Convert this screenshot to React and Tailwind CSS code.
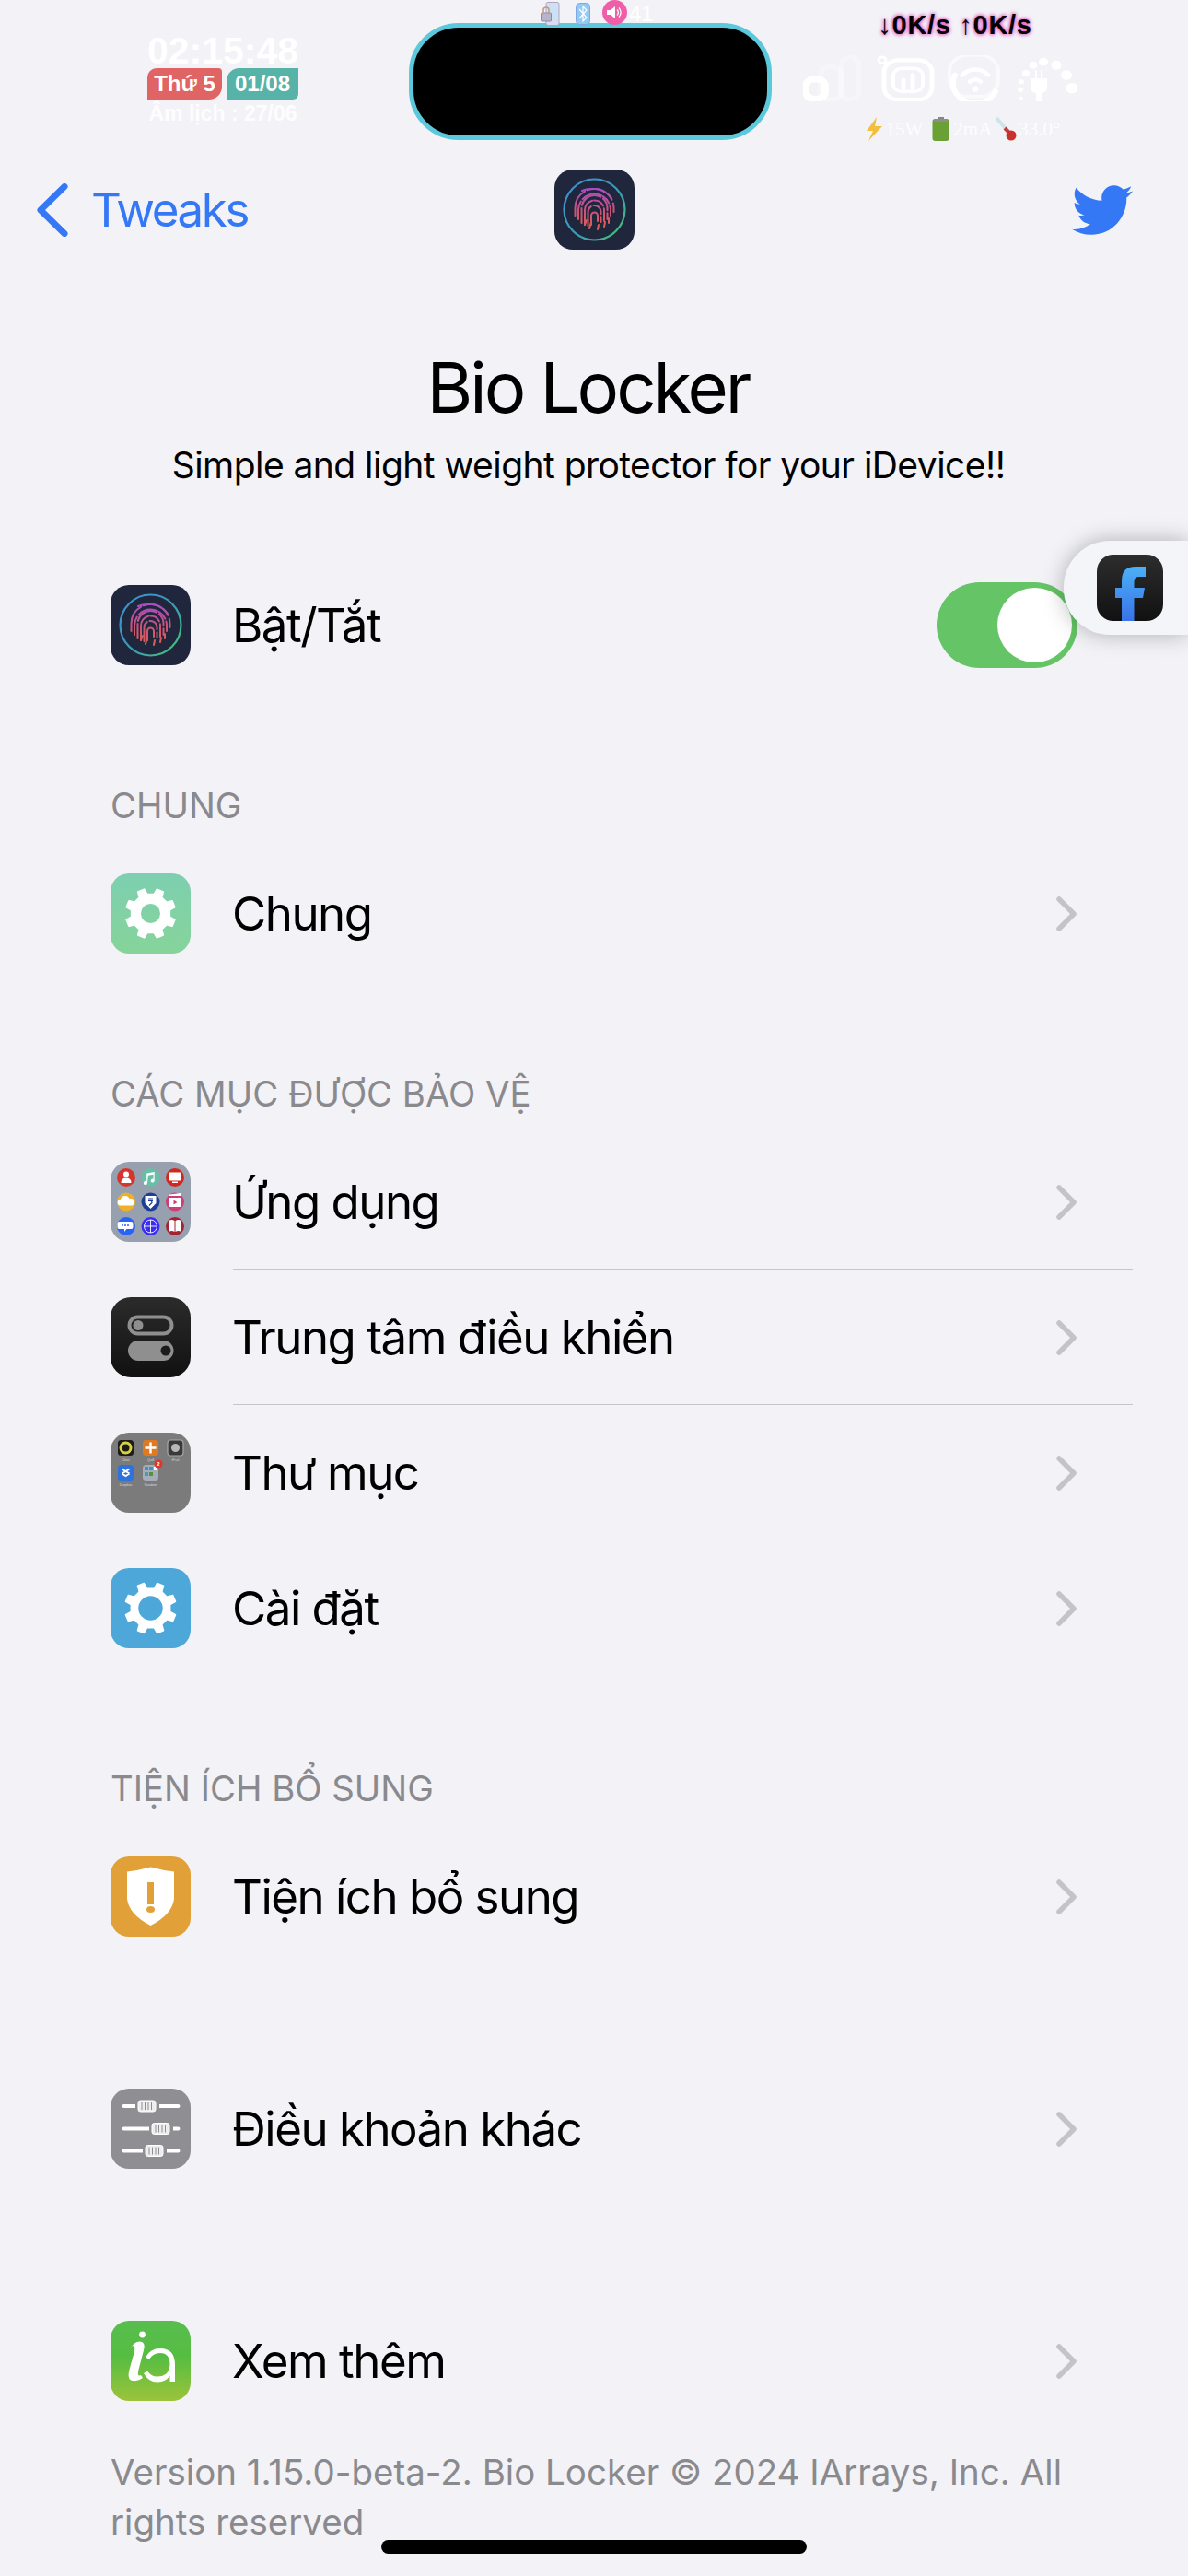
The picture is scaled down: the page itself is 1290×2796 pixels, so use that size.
import React from 'react';
import { FaTwitter } from 'react-icons/fa';

const gearPath = (teeth, outer, root, hole, offset = 0, c = 43.5) => {
  const step = (Math.PI * 2) / teeth;
  let d = '';
  for (let i = 0; i < teeth; i++) {
    const a = offset + i * step;
    const pts = [
      [root, a - step * 0.27],
      [outer, a - step * 0.17],
      [outer, a + step * 0.17],
      [root, a + step * 0.27],
    ];
    pts.forEach(([r, t], j) => {
      const x = (c + r * Math.cos(t)).toFixed(2);
      const y = (c + r * Math.sin(t)).toFixed(2);
      d += `${i === 0 && j === 0 ? 'M' : 'L'}${x} ${y} `;
    });
  }
  d += `Z M${c + hole} ${c} A${hole} ${hole} 0 1 0 ${c - hole} ${c} A${hole} ${hole} 0 1 0 ${c + hole} ${c} Z`;
  return d;
};

const FingerprintIcon = ({ uid }) => {
  const arches = [
    { r: 3.5, top: 38, a: 50, b: 60, dash: '30 3 8 2' },
    { r: 7, top: 36, a: 46, b: 61, dash: '22 3 14 3 8' },
    { r: 10.5, top: 34, a: 44, b: 60, dash: '30 2 12 3 14' },
    { r: 14, top: 32, a: 42, b: 58, dash: '16 3 26 3 14 3 10' },
    { r: 17.5, top: 30, a: 44, b: 54, dash: '20 3 22 2 10 3 12' },
    { r: 21, top: 28, a: 42, b: 50, dash: '30 3 20 3 8 4 12' },
  ];
  return (
    <svg width="87" height="87" viewBox="0 0 87 87" className="block rounded-[20px]">
      <defs>
        <linearGradient id={`${uid}r`} x1="0" y1="0" x2="1" y2="1">
          <stop offset="0" stopColor="#3d8fd6" />
          <stop offset="0.55" stopColor="#3a9cb4" />
          <stop offset="1" stopColor="#4cc46c" />
        </linearGradient>
        <linearGradient id={`${uid}f`} gradientUnits="userSpaceOnUse" x1="0" y1="20" x2="0" y2="68">
          <stop offset="0" stopColor="#a94cc8" />
          <stop offset="0.5" stopColor="#c8547c" />
          <stop offset="1" stopColor="#e2604a" />
        </linearGradient>
      </defs>
      <rect width="87" height="87" fill="#20273c" />
      <circle cx="43.5" cy="43.5" r="33" fill="none" stroke={`url(#${uid}r)`} strokeWidth="2.2" />
      <g fill="none" stroke={`url(#${uid}f)`} strokeWidth="2" strokeLinecap="round">
        {arches.map((p) => (
          <path
            key={p.r}
            d={`M${43.5 - p.r} ${p.b} V${p.a} A${p.r} ${p.r} 0 0 1 ${43.5 + p.r} ${p.a} V${p.b - 4}`}
            strokeDasharray={p.dash}
          />
        ))}
        <path d="M30 23 A24 24 0 0 1 42 21" />
        <path d="M46 21 A24 24 0 0 1 62 31" />
        <path d="M38 64 L40 57 M47 65 L48 60 M33 60 L35 55 M54 62 L55 57 M59 53 L59 58" />
      </g>
    </svg>
  );
};

const GreenGearIcon = () => (
  <svg width="87" height="87" viewBox="0 0 87 87" className="block rounded-[20px]">
    <defs>
      <linearGradient id="greenGear" x1="0" y1="0" x2="0" y2="1">
        <stop offset="0" stopColor="#7dcfb0" />
        <stop offset="1" stopColor="#86d49a" />
      </linearGradient>
    </defs>
    <rect width="87" height="87" fill="url(#greenGear)" />
    <path
      d={gearPath(8, 27, 21, 11.5, Math.PI / 8)}
      fill="#fff"
      fillRule="evenodd"
      stroke="#fff"
      strokeWidth="2"
      strokeLinejoin="round"
    />
  </svg>
);

const BlueGearIcon = () => (
  <svg width="87" height="87" viewBox="0 0 87 87" className="block rounded-[20px]">
    <rect width="87" height="87" fill="#4da7d8" />
    <path
      d={gearPath(8, 28, 21.5, 14, Math.PI / 8)}
      fill="#fff"
      fillRule="evenodd"
      stroke="#fff"
      strokeWidth="1.5"
      strokeLinejoin="round"
    />
  </svg>
);

const AppsFolderIcon = () => {
  const cols = [17, 43.5, 70];
  const rows = [17, 43.5, 70];
  const colors = ['#d9342b', '#66bfa6', '#d0281f', '#edb02c', '#1d3f96', '#d03c78', '#2a62f5', '#3b2df0', '#a32430'];
  return (
    <svg width="87" height="87" viewBox="0 0 87 87" className="block rounded-[20px]">
      <rect width="87" height="87" fill="#97a0ae" />
      {rows.map((y, r) =>
        cols.map((x, c) => <circle key={`${r}${c}`} cx={x} cy={y} r="10" fill={colors[r * 3 + c]} />),
      )}
      <g fill="#fff">
        <circle cx="17" cy="13.5" r="3" />
        <path d="M11.5 23 q0-5.5 5.5-5.5 t5.5 5.5z" />
        <path d="M40 23 a2 2 0 1 1 -.8-1.6 V12.5 l8.5-1.5 v9.5 a2 2 0 1 1 -1.2-1.8 v-5 l-5.5 1z" />
        <rect x="63.5" y="11.5" width="13" height="9" rx="1" />
        <rect x="67" y="21.5" width="6" height="1.5" />
        <path d="M10 47.5 a3.5 3.5 0 0 1 1-6.8 a5 5 0 0 1 9.5-.5 a3.6 3.6 0 0 1 3 7.3z" />
        <path d="M37.5 37 L49.5 37 L49.5 45 L43.5 51 L37.5 45z" />
        <rect x="63.5" y="39" width="13" height="10" rx="1" />
        <path d="M64 35.5 l12-1.5 v3 h-12z" />
        <path d="M10.5 65.5 h13 a2 2 0 0 1 2 2 v4 a2 2 0 0 1-2 2 h-5 l-2.5 3 v-3 h-5.5 a2 2 0 0 1-2-2 v-4 a2 2 0 0 1 2-2z" transform="translate(-1 -0.5)" />
        <path d="M64 63.5 q3-1 5.5 .5 v12 q-2.5-1.5-5.5-.5z M76 63.5 q-3-1-5.5 .5 v12 q2.5-1.5 5.5-.5z" />
      </g>
      <g fill="none" stroke="#fff" strokeWidth="0.9">
        <circle cx="43.5" cy="70" r="7" />
        <path d="M36.5 70 h14 M43.5 63 v14" />
      </g>
      <g fill="#2a62f5">
        <circle cx="13" cy="69" r="1" />
        <circle cx="16" cy="69" r="1" />
        <circle cx="19" cy="69" r="1" />
      </g>
      <path d="M41 40 h5 M41 42.5 h5 M43 42.5 q2 0 2 2 l-3 3" stroke="#1d3f96" strokeWidth="1.2" fill="none" />
      <path d="M68.5 41.5 l4 2.5 l-4 2.5z" fill="#d03c78" />
    </svg>
  );
};

const ControlCenterIcon = () => (
  <svg width="87" height="87" viewBox="0 0 87 87" className="block rounded-[22px]">
    <defs>
      <linearGradient id="ccBg" x1="0" y1="0" x2="0" y2="1">
        <stop offset="0" stopColor="#2b2b2b" />
        <stop offset="1" stopColor="#111" />
      </linearGradient>
    </defs>
    <rect width="87" height="87" fill="url(#ccBg)" />
    <rect x="20.5" y="21.5" width="46" height="18" rx="9" fill="none" stroke="#8f8f8f" strokeWidth="4" />
    <circle cx="30" cy="30.5" r="5.5" fill="#8f8f8f" />
    <rect x="19" y="47" width="49.5" height="22" rx="11" fill="#8f8f8f" />
    <circle cx="60" cy="58" r="5.5" fill="#1c1c1c" />
  </svg>
);

const FoldersIcon = () => {
  const Tile = ({ x, y, bg, label, children }) => (
    <g>
      <rect x={x} y={y} width="17" height="17" rx="3.5" fill={bg} />
      {children}
      <text x={x + 8.5} y={y + 22.5} textAnchor="middle" fontSize="3.6" fill="#d8d8d8" fontFamily="Liberation Sans, sans-serif">
        {label}
      </text>
    </g>
  );
  return (
    <svg width="87" height="87" viewBox="0 0 87 87" className="block rounded-[20px]">
      <rect width="87" height="87" fill="#7b7b7b" />
      <Tile x={8} y={8} bg="#1c1c1c" label="Clear">
        <circle cx="16.5" cy="16.5" r="5.5" fill="none" stroke="#d8d23c" strokeWidth="3" />
      </Tile>
      <Tile x={35} y={8} bg="#e07a22" label="Quill">
        <path d="M43.5 10.5 v12 M37.5 16.5 h12" stroke="#fff" strokeWidth="2.4" />
      </Tile>
      <Tile x={62} y={8} bg="#3a3a3a" label="iFruit">
        <rect x="62" y="8" width="17" height="17" rx="3.5" fill="none" stroke="#a8a8a8" strokeWidth="1.2" />
        <circle cx="70.5" cy="16.5" r="4.5" fill="#b8b8b8" />
      </Tile>
      <Tile x={8} y={35} bg="#2f72dc" label="Dropbox">
        <path d="M12.5 39.5 l4 2.5 l4-2.5 M12.5 44.5 l4 2.5 l4-2.5 M16.5 42 l-4 2.5 M16.5 42 l4 2.5" stroke="#fff" strokeWidth="2" fill="none" />
      </Tile>
      <Tile x={35} y={35} bg="#a5adb8" label="Random">
        <rect x="37" y="37" width="4" height="4" fill="#3f8fd0" />
        <rect x="42" y="37" width="4" height="4" fill="#3f8fd0" />
        <rect x="47" y="37" width="3.5" height="4" fill="#fff" />
        <rect x="37" y="43" width="4" height="4" fill="#42a0a8" />
        <rect x="42" y="43" width="4" height="4" fill="#5b8f3c" />
      </Tile>
      <circle cx="52" cy="34" r="4.5" fill="#e0352f" />
      <text x="52" y="36" textAnchor="middle" fontSize="6" fontWeight="700" fill="#fff" fontFamily="Liberation Sans, sans-serif">
        2
      </text>
    </svg>
  );
};

const ShieldIcon = () => (
  <svg width="87" height="87" viewBox="0 0 87 87" className="block rounded-[20px]">
    <rect width="87" height="87" fill="#e2a138" />
    <path d="M18 16.5 Q31 15 43.5 11.5 Q56 15 69 16.5 V46 Q67 63 43.5 75 Q20 63 18 46z" fill="#fff" />
    <rect x="40" y="28" width="7" height="24" fill="#e2a138" />
    <ellipse cx="43.5" cy="57.5" rx="4.5" ry="3.5" fill="#e2a138" />
  </svg>
);

const SlidersIcon = () => {
  const Handle = ({ x, y }) => (
    <g>
      <rect x={x} y={y - 6} width="19" height="12" rx="2.5" fill="#eeeeee" stroke="#fff" strokeWidth="1" />
      <path d={`M${x + 4} ${y - 4} v8 M${x + 7.5} ${y - 4} v8 M${x + 11} ${y - 4} v8 M${x + 14.5} ${y - 4} v8`} stroke="#8e8e93" strokeWidth="1" />
    </g>
  );
  return (
    <svg width="87" height="87" viewBox="0 0 87 87" className="block rounded-[20px]">
      <rect width="87" height="87" fill="#8e8e93" />
      <path d="M14.5 19 H73.5 M14.5 43.5 H73.5 M14.5 67.5 H73.5" stroke="#fff" strokeWidth="4" strokeLinecap="round" />
      <g stroke="#8e8e93" strokeWidth="0">
        <rect x="27" y="13" width="26" height="12" fill="#8e8e93" />
        <rect x="42" y="37" width="26" height="12" fill="#8e8e93" />
        <rect x="35" y="61" width="26" height="12" fill="#8e8e93" />
      </g>
      <Handle x={30} y={19} />
      <Handle x={45} y={43.5} />
      <Handle x={38} y={67.5} />
    </svg>
  );
};

const IaIcon = () => (
  <svg width="87" height="87" viewBox="0 0 87 87" className="block rounded-[20px]">
    <defs>
      <linearGradient id="iaBg" x1="0" y1="0" x2="0" y2="1">
        <stop offset="0" stopColor="#57bd4e" />
        <stop offset="0.45" stopColor="#56bd42" />
        <stop offset="1" stopColor="#9cc33a" />
      </linearGradient>
    </defs>
    <rect width="87" height="87" fill="url(#iaBg)" />
    <circle cx="34.5" cy="15" r="3.4" fill="#fff" />
    <path d="M21 31 Q25 22.5 32 22.5 Q38.5 23 36 32 L30 55 Q29 61 33 59 L35 62 Q27 67 22 64.5 Q18 62 20.5 53 L26 33 Q27 27 24 27 Q22.5 27.5 21 31z" fill="#fff" />
    <path d="M70 66 H64.5 V59.5 Q60 66.5 51 66.5 Q41 66.5 36 57 L40 54.5 Q44 60.5 50.5 60.5 Q64 60.5 64.5 47 Q64 35 54 35 Q46 35 42 42 L38 39.5 Q43 30 54 30 Q70 30 70 48z" fill="#fff" />
  </svg>
);

const StatusGlyphs = () => (
  <svg width="310" height="50" viewBox="0 0 310 56" preserveAspectRatio="none" fill="none" stroke="#fff" className="block">
    {/* signal */}
    <rect x="3" y="29" width="21" height="24" rx="9" strokeWidth="8" />
    <rect x="19" y="14" width="22" height="40" rx="10" strokeWidth="6" opacity="0.35" />
    <rect x="42" y="2" width="18" height="52" rx="9" strokeWidth="6" opacity="0.35" />
    {/* data */}
    <rect x="88" y="6" width="52" height="48" rx="15" strokeWidth="5" />
    <rect x="98" y="16" width="32" height="28" rx="9" strokeWidth="4" />
    <path d="M109 40 v-10 M119 40 v-16" strokeWidth="5" strokeLinecap="round" />
    <circle cx="86" cy="6" r="4" strokeWidth="3" />
    {/* wifi */}
    <g transform="translate(-5 0)">
      <rect x="164" y="0" width="53" height="50" rx="20" strokeWidth="4" opacity="0.6" />
      <path d="M170 24 a22 22 0 1 0 44 20" strokeWidth="6" strokeLinecap="round" />
      <path d="M178 24 a18 18 0 0 1 28 0 M186 32 a9 9 0 0 1 12 0" strokeWidth="5" strokeLinecap="round" />
      <circle cx="192" cy="41" r="3.5" fill="#fff" stroke="none" />
    </g>
    {/* charge */}
    <g fill="#fff" stroke="none" transform="translate(-6 0)">
      <path d="M258 18 v10 h-5 v10 a8 8 0 0 0 6 8 v10 h6 v-10 a8 8 0 0 0 6-8 v-10 h-5 v-10 h-2 v10 h-4 v-10z" />
      <circle cx="243" cy="52" r="2" />
      <circle cx="242" cy="42" r="3" />
      <circle cx="243" cy="32" r="3" />
      <circle cx="248" cy="22" r="4" />
      <circle cx="256" cy="12" r="4.5" />
      <circle cx="267" cy="8" r="5" />
      <circle cx="281" cy="12" r="5.5" />
      <circle cx="292" cy="24" r="6" />
      <circle cx="298" cy="40" r="6.5" />
    </g>
  </svg>
);

const LeftStatus = () => (
  <div className="w-[164px] ml-[160px] pt-[40px] font-['Liberation_Sans',sans-serif] font-bold text-white">
    <div className="text-[41px] leading-[30px] text-center whitespace-nowrap">02:15:48</div>
    <div className="flex justify-between mt-[4px]">
      <div className="w-[81px] h-[34px] bg-[#e06464] rounded-tr-[4px] rounded-br-[14px] rounded-tl-[10px] text-[24px] leading-[34px] text-center whitespace-nowrap">
        Thứ 5
      </div>
      <div className="w-[78px] h-[34px] bg-[#57b2a8] rounded-tl-[14px] rounded-br-[6px] text-[24px] leading-[34px] text-center whitespace-nowrap">
        01/08
      </div>
    </div>
    <div className="text-[23px] leading-[26px] mt-[2px] text-center text-white/85 whitespace-nowrap">Âm lịch : 27/06</div>
  </div>
);

const RightStatus = () => (
  <div className="flex flex-col items-center w-[330px] ml-[24px] pt-[12px]">
    <div className="ml-[20px] font-['Liberation_Sans',sans-serif] font-bold text-[29px] leading-[30px] tracking-[0.7px] text-black whitespace-nowrap [text-shadow:0_0_4px_#e455c0,0_0_4px_#e455c0]">
      ↓0K/s ↑0K/s
    </div>
    <div className="mt-[18px]">
      <StatusGlyphs />
    </div>
    <div className="flex items-center mt-[17px] ml-[36px] font-['Liberation_Serif',serif] text-[21px] leading-[26px] text-white/85 whitespace-nowrap">
      <svg width="20" height="26" viewBox="0 0 20 26" className="mr-[3px]">
        <path d="M13 0 L2 15 H9 L4 26 L19 10 H11z" fill="#f5bd3c" />
      </svg>
      15W
      <svg width="19" height="26" viewBox="0 0 19 26" className="ml-[10px] mr-[4px]">
        <rect x="6" y="0" width="7" height="3" fill="#888" />
        <rect x="0.5" y="2" width="18" height="24" rx="3" fill="#6aa135" />
        <rect x="2" y="2" width="15" height="3" fill="#8d8d8d" />
      </svg>
      2mA
      <svg width="24" height="26" viewBox="0 0 24 26" className="ml-[3px] mr-[2px]">
        <path d="M2 1 L14 15" stroke="#cfe3ec" strokeWidth="4" />
        <path d="M11 12 L17 18" stroke="#c83c3c" strokeWidth="4" />
        <circle cx="18" cy="20" r="5.5" fill="#c8322e" />
      </svg>
      33.0°
    </div>
  </div>
);

const TopIcons = () => (
  <div className="absolute top-0 left-[587px] flex items-start">
    <svg width="21" height="26" viewBox="0 0 21 26" className="mt-[2px]">
      <rect x="6" y="0.5" width="14" height="25" rx="2" fill="#dcdcf0" stroke="#a9a6c4" />
      <rect x="8" y="4" width="10" height="15" fill="#c9e3f5" />
      <rect x="0.5" y="12" width="11" height="9" rx="1" fill="#b9b4cc" stroke="#8f8aa8" />
      <path d="M3 12 V9 a3 3 0 0 1 6 0 V12" fill="none" stroke="#c89a7a" strokeWidth="1.5" />
    </svg>
    <svg width="16" height="24" viewBox="0 0 16 24" className="ml-[17px] mt-[3px]">
      <rect x="0.5" y="0.5" width="15" height="23" rx="4" fill="#93c9f3" stroke="#7fa8e0" />
      <path d="M4 7 L12 16 L8 20 V4 L12 8 L4 17" fill="none" stroke="#fff" strokeWidth="1.2" />
    </svg>
    <div className="ml-[13px] w-[27px] h-[27px] rounded-full bg-[#ee5fa7] flex items-center justify-center">
      <svg width="19" height="19" viewBox="0 0 19 19">
        <path d="M1 7 H5 L10 3 V16 L5 12 H1z" fill="#fff" />
        <path d="M12 6.5 a4 4 0 0 1 0 6 M14 4.5 a7 7 0 0 1 0 10" fill="none" stroke="#fff" strokeWidth="1.3" />
      </svg>
    </div>
    <span className="ml-[2px] mt-[3px] font-['Liberation_Sans',sans-serif] text-[24px] leading-[24px] text-white">41</span>
  </div>
);

const StatusBar = () => (
  <div className="relative flex h-[184px] items-start">
    <LeftStatus />
    <div className="ml-[120px] mt-[25px] w-[394px] h-[127px] shrink-0 rounded-[54px] bg-black border-[5px] border-[#5bc8dc]" />
    <RightStatus />
    <TopIcons />
  </div>
);

const NavBar = () => (
  <div className="relative flex h-[87px] items-center justify-between pl-[40px] pr-[60px]">
    <div className="flex items-center text-[#3478f6] text-[51px] leading-none">
      <svg width="34" height="58" viewBox="0 0 34 58" fill="none" stroke="#3478f6" strokeWidth="7" strokeLinecap="round" strokeLinejoin="round">
        <path d="M30 3.5 L4 29 L30 54.5" />
      </svg>
      <span className="ml-[25px] tracking-[-2.4px]">Tweaks</span>
    </div>
    <div className="absolute left-[602px] top-0 overflow-hidden">
      <FingerprintIcon uid="nav" />
    </div>
    <FaTwitter className="text-[#3478f6] w-[66px] h-[66px]" />
  </div>
);

const Chevron = () => (
  <svg width="24" height="40" viewBox="0 0 24 40" fill="none" stroke="#c4c4c7" strokeWidth="5.5" strokeLinecap="round" strokeLinejoin="round">
    <path d="M4 4 L20 20 L4 36" />
  </svg>
);

const Row = ({ icon, label, divider, trailing }) => (
  <div className="relative flex h-[147px] items-center pl-[120px] pr-[120px]">
    <div className="w-[87px] h-[87px] shrink-0">{icon}</div>
    <div className="ml-[45px] flex-1 text-[51px] leading-[60px] tracking-[-1.5px] text-black whitespace-nowrap">{label}</div>
    {trailing || <Chevron />}
    {divider && <div className="absolute left-[253px] right-[60px] bottom-0 h-[1.5px] bg-[#c6c6c8]" />}
  </div>
);

const SectionHeader = ({ children }) => (
  <div className="flex h-[166px] items-end pl-[120px] pb-[19px] text-[38.3px] leading-[50px] text-[#8a8a8e] whitespace-nowrap">
    {children}
  </div>
);

const Toggle = () => (
  <div className="relative w-[153px] h-[93px] rounded-full bg-[#65c466]">
    <div className="absolute right-[6px] top-[6px] w-[81px] h-[81px] rounded-full bg-white" />
  </div>
);

const FacebookBubble = () => (
  <div className="absolute left-[1155px] top-[587px] w-[135px] h-[102px] rounded-l-[50px] bg-[#f4f5f9] shadow-[0_0_24px_rgba(0,0,0,0.28)] flex items-center pl-[36px]">
    <svg width="72" height="72" viewBox="0 0 72 72" className="block rounded-[18px]">
      <defs>
        <linearGradient id="fbBg" x1="0" y1="0" x2="0" y2="1">
          <stop offset="0" stopColor="#2d2d2d" />
          <stop offset="1" stopColor="#111" />
        </linearGradient>
        <linearGradient id="fbF" x1="0" y1="0" x2="0" y2="1">
          <stop offset="0" stopColor="#4cb0f5" />
          <stop offset="1" stopColor="#3a72e8" />
        </linearGradient>
      </defs>
      <rect width="72" height="72" fill="url(#fbBg)" />
      <path d="M27 72 V47 H20 V36 H27 V28 Q27 13 42 13 H53 V24 H46 Q40.5 24 40.5 29 V36 H52 L50 47 H40.5 V72z" fill="url(#fbF)" />
    </svg>
  </div>
);

const App = () => (
  <div className="relative w-[1290px] h-[2796px] overflow-hidden bg-[#f2f2f7] font-[Inter,sans-serif]">
    <StatusBar />
    <NavBar />
    <div className="text-center text-black pt-[101px]">
      <div className="text-[76px] leading-[96px] tracking-[-3px] -ml-[13px]">Bio Locker</div>
      <div className="text-[39px] leading-[50px] mt-[12px] tracking-[-0.55px] -ml-[12px] whitespace-nowrap">
        Simple and light weight protector for your iDevice!!
      </div>
    </div>
    <div className="mt-[75px]">
      <Row icon={<FingerprintIcon uid="row" />} label="Bật/Tắt" trailing={<Toggle />} />
      <SectionHeader>CHUNG</SectionHeader>
      <Row icon={<GreenGearIcon />} label="Chung" />
      <SectionHeader>CÁC MỤC ĐƯỢC BẢO VỆ</SectionHeader>
      <Row icon={<AppsFolderIcon />} label="Ứng dụng" divider />
      <Row icon={<ControlCenterIcon />} label="Trung tâm điều khiển" divider />
      <Row icon={<FoldersIcon />} label="Thư mục" divider />
      <Row icon={<BlueGearIcon />} label="Cài đặt" />
      <SectionHeader>TIỆN ÍCH BỔ SUNG</SectionHeader>
      <Row icon={<ShieldIcon />} label="Tiện ích bổ sung" />
      <div className="h-[105px]" />
      <Row icon={<SlidersIcon />} label="Điều khoản khác" />
      <div className="h-[105px]" />
      <Row icon={<IaIcon />} label="Xem thêm" />
      <div className="pl-[120px] pr-[120px] mt-[20px] text-[38.5px] leading-[54px] text-[#8a8a8e]">
        Version 1.15.0-beta-2. Bio Locker © 2024 IArrays, Inc. All rights reserved
      </div>
    </div>
    <FacebookBubble />
    <div className="absolute left-[414px] top-[2757px] w-[462px] h-[15px] rounded-full bg-black" />
  </div>
);

export default App;
